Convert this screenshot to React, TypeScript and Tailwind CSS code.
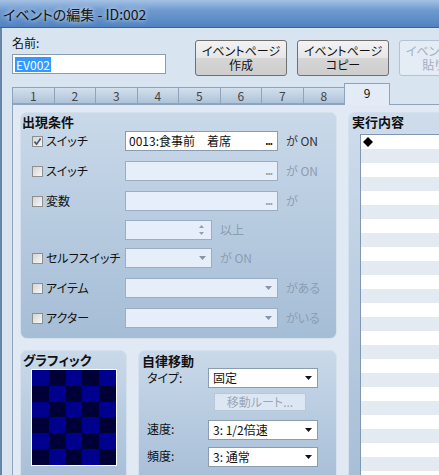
import type { ReactNode } from 'react'

const TABS = ['1', '2', '3', '4', '5', '6', '7', '8']
const LIST_ROWS = Array.from({ length: 26 }, (_, i) => i)
const GRAPHIC_CELLS = Array.from({ length: 30 }, (_, i) => i)

function CheckBox({ checked }: { checked?: boolean }) {
	return (
		<span className="relative block h-[11px] w-[11px] shrink-0 border border-[#8e8f8f] bg-[linear-gradient(135deg,#d4d4d4,#f8f8f8)]">
			{checked ? (
				<svg viewBox="0 0 9 9" className="absolute inset-0 h-[9px] w-[9px]">
					<path d="M1.5 4.6 L3.6 7.2 L7.6 1.4" fill="none" stroke="#46597a" strokeWidth="1.7" />
				</svg>
			) : null}
		</span>
	)
}

function Arrow({ color }: { color: string }) {
	return (
		<svg viewBox="0 0 7 4" className="h-[4px] w-[7px] shrink-0">
			<path d="M0 0 H7 L3.5 4 Z" fill={color} />
		</svg>
	)
}

function Field({
	width,
	disabled,
	children,
	trailing,
}: {
	width: number
	disabled?: boolean
	children?: ReactNode
	trailing?: ReactNode
}) {
	return (
		<div
			className={
				disabled
					? 'flex h-5 shrink-0 items-center justify-between border border-[#9aadc1] bg-[#e6eef9] pl-[3px] pr-[5px]'
					: 'flex h-5 shrink-0 items-center justify-between border border-[#8a9cb0] bg-white pl-[3px] pr-[5px]'
			}
			style={{ width }}
		>
			<span className="whitespace-nowrap text-[12px] leading-[14px] text-[#111]">{children}</span>
			{trailing}
		</div>
	)
}

function Dots({ disabled }: { disabled?: boolean }) {
	return (
		<span
			className={
				disabled
					? 'text-[10px] font-bold leading-[10px] tracking-[-1px] text-[#8e9fb3]'
					: 'text-[10px] font-bold leading-[10px] tracking-[-1px] text-[#111]'
			}
		>
			...
		</span>
	)
}

function ConditionRow({
	label,
	checked,
	disabled,
	children,
	suffix,
	top,
}: {
	label?: string
	checked?: boolean
	disabled?: boolean
	children: ReactNode
	suffix?: string
	top: number
}) {
	return (
		<div className="flex h-5 items-center" style={{ marginTop: top }}>
			<div className="flex w-[104px] shrink-0 items-center pl-[11px]">
				{label ? (
					<>
						<CheckBox checked={checked} />
						<span className="ml-[3px] text-[12px] leading-[14px] text-[#111]">{label}</span>
					</>
				) : null}
			</div>
			{children}
			{suffix ? (
				<span
					className={
						disabled
							? 'ml-[8px] text-[12px] leading-[14px] text-[#8b9db3]'
							: 'ml-[8px] text-[12px] leading-[14px] text-[#333]'
					}
				>
					{suffix}
				</span>
			) : null}
		</div>
	)
}

function PageButton({ lines, disabled }: { lines: [string, string]; disabled?: boolean }) {
	return (
		<div
			className={
				disabled
					? 'flex h-[36px] w-[92px] shrink-0 flex-col items-center justify-center rounded-[3px] border border-[#b4c3d3] bg-[#e4ecf5] text-[12px] leading-[14px] text-[#a3b0bf]'
					: 'flex h-[36px] w-[92px] shrink-0 flex-col items-center justify-center rounded-[3px] border border-[#707070] bg-[linear-gradient(to_bottom,#f3f3f3_0%,#e6e6e6_50%,#d6d6d6_51%,#cdcdcd_100%)] text-[12px] leading-[14px] text-[#111]'
			}
		>
			<span>{lines[0]}</span>
			<span>{lines[1]}</span>
		</div>
	)
}

function Combo({ value, top }: { value: string; top: number }) {
	return (
		<div
			className="ml-[69px] flex h-5 w-[110px] items-center justify-between border border-[#8a9cb0] bg-white pl-[4px] pr-[5px]"
			style={{ marginTop: top }}
		>
			<span className="text-[12px] leading-[14px] text-[#111]">{value}</span>
			<Arrow color="#111" />
		</div>
	)
}

export default function App() {
	return (
		<div className="relative flex h-[475px] w-[439px] flex-col overflow-hidden bg-[#d9e4f1] font-['Noto_Sans_CJK_JP',sans-serif] [font-feature-settings:'palt']">
			<div className="flex h-[28px] shrink-0 items-center border-b border-[#40618c] bg-[linear-gradient(to_bottom,#a4c1e4_0%,#6d99cf_40%,#5183c0_100%)] pl-[3px]">
				<span className="text-[14px] leading-[16px] text-[#141414] [text-shadow:0_0_5px_#ffffff]">
					イベントの編集 - ID:002
				</span>
			</div>

			<div className="flex flex-1 flex-col border-l-[2px] border-[#6685ab] pl-[10px]">
				<div className="flex h-[55px] shrink-0">
					<div className="flex w-[154px] shrink-0 flex-col pt-[8px]">
						<span className="text-[12px] leading-[14px] text-[#111]">名前:</span>
						<div className="mt-[4px] flex h-5 items-center border border-[#8a9cb0] bg-white pl-[2px]">
							<span className="bg-[#3399ff] px-[1px] text-[12px] leading-[15px] text-white">EV002</span>
						</div>
					</div>
					<div className="ml-[29px] flex shrink-0 gap-[10px] pt-[12px]">
						<PageButton lines={['イベントページ', '作成']} />
						<PageButton lines={['イベントページ', 'コピー']} />
						<PageButton lines={['イベントページ', '貼り付け']} disabled />
					</div>
				</div>

				<div className="flex h-[21px] shrink-0 items-end">
					{TABS.map(tab => (
						<div
							key={tab}
							className="flex h-[17px] w-[41.5px] shrink-0 items-center justify-center border border-r-0 border-[#8ea4bc] bg-[linear-gradient(to_bottom,#d3e0ed,#aec3d8)] text-[12px] leading-[14px] text-[#444]"
						>
							{tab}
						</div>
					))}
					<div className="relative z-10 -mb-px flex h-[22px] w-[46px] shrink-0 items-start justify-center border border-b-0 border-[#8ea4bc] bg-[#e3ecf6] pt-[2px] text-[12px] leading-[14px] text-[#111]">
						9
					</div>
				</div>

				<div className="flex flex-1 border-l border-t border-[#8ea4bc] bg-[#e0e9f4] pl-[7px] pt-[7px]">
					<div className="flex w-[317px] shrink-0 flex-col">
						<div className="flex h-[227px] flex-col rounded-[7px] border border-[#d4e0ec] bg-[linear-gradient(to_bottom,#c9d9e9,#a5bdd6)]">
							<span className="pl-[1px] pt-[1px] text-[13px] font-bold leading-[15px] text-[#111]">出現条件</span>
							<ConditionRow label="スイッチ" checked suffix="が ON" top={2}>
								<Field width={153} trailing={<Dots />}>
									0013:食事前　着席
								</Field>
							</ConditionRow>
							<ConditionRow label="スイッチ" disabled suffix="が ON" top={10}>
								<Field width={153} disabled trailing={<Dots disabled />} />
							</ConditionRow>
							<ConditionRow label="変数" disabled suffix="が" top={10}>
								<Field width={153} disabled trailing={<Dots disabled />} />
							</ConditionRow>
							<ConditionRow disabled suffix="以上" top={9}>
								<Field
									width={87}
									disabled
									trailing={
										<span className="flex flex-col gap-[4px] pr-[2px]">
											<svg viewBox="0 0 5 3" className="h-[3px] w-[5px]">
												<path d="M0 3 H5 L2.5 0 Z" fill="#8e9fb3" />
											</svg>
											<svg viewBox="0 0 5 3" className="h-[3px] w-[5px]">
												<path d="M0 0 H5 L2.5 3 Z" fill="#8e9fb3" />
											</svg>
										</span>
									}
								/>
							</ConditionRow>
							<ConditionRow label="セルフスイッチ" disabled suffix="が ON" top={8}>
								<Field width={87} disabled trailing={<Arrow color="#8596ab" />} />
							</ConditionRow>
							<ConditionRow label="アイテム" disabled suffix="がある" top={10}>
								<Field width={153} disabled trailing={<Arrow color="#8596ab" />} />
							</ConditionRow>
							<ConditionRow label="アクター" disabled suffix="がいる" top={10}>
								<Field width={153} disabled trailing={<Arrow color="#8596ab" />} />
							</ConditionRow>
						</div>

						<div className="mt-[11px] flex gap-[11px]">
							<div className="flex h-[140px] w-[107px] shrink-0 flex-col rounded-[7px] border border-[#d4e0ec] bg-[linear-gradient(to_bottom,#c9d9e9,#a5bdd6)]">
								<span className="pl-[2px] pt-[1px] text-[13px] font-bold leading-[15px] text-[#111]">グラフィック</span>
								<div className="ml-[10px] mt-[2px] grid h-[97px] w-[86px] grid-cols-5 grid-rows-6 border border-white">
									{GRAPHIC_CELLS.map(i => (
										<div
											key={i}
											className={(Math.floor(i / 5) + (i % 5)) % 2 === 0 ? 'bg-[#00008e]' : 'bg-[#000036]'}
										/>
									))}
								</div>
							</div>

							<div className="flex h-[140px] w-[199px] shrink-0 flex-col rounded-[7px] border border-[#d4e0ec] bg-[linear-gradient(to_bottom,#c9d9e9,#a5bdd6)]">
								<span className="pl-[3px] pt-[2px] text-[13px] font-bold leading-[15px] text-[#111]">自律移動</span>
								<div className="relative">
									<span className="absolute left-[8px] top-[3px] text-[12px] leading-[14px] text-[#111]">タイプ:</span>
									<Combo value="固定" top={0} />
								</div>
								<div className="ml-[75px] mt-[5px] flex h-[18px] w-[92px] items-center justify-center border border-[#b8c8d8] bg-[#dde7f3] text-[12px] leading-[14px] text-[#98a7b9]">
									移動ルート...
								</div>
								<div className="relative">
									<span className="absolute left-[8px] top-[11px] text-[12px] leading-[14px] text-[#111]">速度:</span>
									<Combo value="3: 1/2倍速" top={9} />
								</div>
								<div className="relative">
									<span className="absolute left-[8px] top-[9px] text-[12px] leading-[14px] text-[#111]">頻度:</span>
									<Combo value="3: 通常" top={7} />
								</div>
							</div>
						</div>
					</div>

					<div className="ml-[11px] flex flex-1 flex-col rounded-tl-[7px] border-l border-t border-[#d4e0ec] bg-[linear-gradient(to_bottom,#cfdcec,#a5bdd6)]">
						<span className="pl-[3px] pt-[1px] text-[13px] font-bold leading-[15px] text-[#111]">実行内容</span>
						<div className="ml-[11px] mt-[5px] flex flex-1 flex-col border-l border-t border-[#7f97b0] bg-white">
							{LIST_ROWS.map(i => (
								<div
									key={i}
									className={
										i % 2 === 0
											? 'flex h-[14px] shrink-0 items-center bg-white pl-[2px]'
											: 'flex h-[14px] shrink-0 items-center bg-[#e3eaf2] pl-[2px]'
									}
								>
									{i === 0 ? (
										<svg viewBox="0 0 10 10" className="h-[10px] w-[10px]">
											<path d="M5 0 L10 5 L5 10 L0 5 Z" fill="#000" />
										</svg>
									) : null}
								</div>
							))}
						</div>
					</div>
				</div>
			</div>
		</div>
	)
}
